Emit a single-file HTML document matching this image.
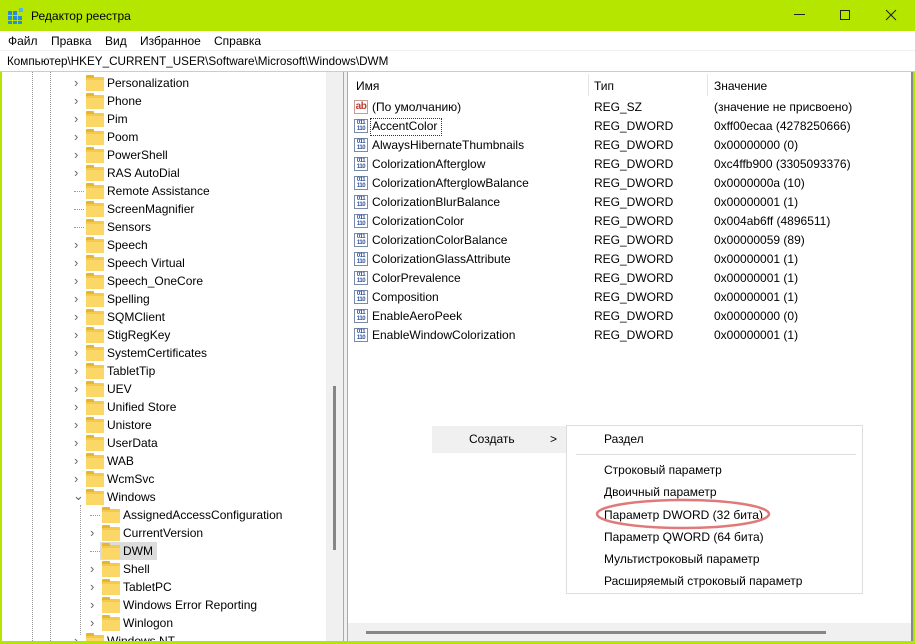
<!DOCTYPE html>
<html style="overflow:hidden;width:915px;height:644px"><head><meta charset="utf-8"><style>
*{margin:0;padding:0;box-sizing:border-box}
body{width:915px;height:644px;overflow:hidden;background:#b4e600;font-family:"Liberation Sans","DejaVu Sans",sans-serif;font-size:12px;color:#000;position:relative}
.abs{position:absolute}
.t{position:absolute;white-space:nowrap;line-height:16px}
.fold{position:absolute;width:18px;height:14px;background:#f5c94a;border-radius:1px}
.fold:before{content:"";position:absolute;left:0;top:-2px;width:8px;height:3px;background:#e8b530;border-radius:1px 1px 0 0}
.fold:after{content:"";position:absolute;left:0;top:3px;width:18px;height:11px;background:#fbd767}
.chev{position:absolute;color:#666;font-size:13px;line-height:16px}
.ico{position:absolute;width:14px;height:14px;border:1px solid #7a8aa8;background:#fff;font-size:6px;line-height:6px;color:#2a4f9e;font-weight:bold;text-align:center;letter-spacing:-0.5px}
#treewrap{position:absolute;left:2px;top:72px;width:324px;height:569px;overflow:hidden}
</style></head><body>
<div class="abs" style="left:8px;top:8px;width:16px;height:16px">
<svg width="16" height="16"><g fill="#2b8be0"><rect x="0" y="3" width="4" height="4"/><rect x="5" y="3" width="4" height="4"/><rect x="0" y="8" width="4" height="4"/><rect x="5" y="8" width="4" height="4"/><rect x="10" y="8" width="4" height="4"/><rect x="0" y="13" width="4" height="3"/><rect x="5" y="13" width="4" height="3"/><rect x="10" y="13" width="4" height="3"/></g><rect x="11" y="0" width="4" height="4" fill="#5ab0f0"/></svg></div>
<div class="t" style="left:31px;top:8px;font-size:12px">Редактор реестра</div>
<div class="abs" style="left:794px;top:14px;width:11px;height:1px;background:#222"></div>
<div class="abs" style="left:840px;top:10px;width:10px;height:10px;border:1px solid #222"></div>
<svg class="abs" style="left:885px;top:9px" width="12" height="12"><path d="M1 1L11 11M11 1L1 11" stroke="#222" stroke-width="1"/></svg>
<div class="abs" style="left:0;top:31px;width:915px;height:20px;background:#fff"></div>
<div class="t" style="left:8px;top:33px">Файл</div>
<div class="t" style="left:51px;top:33px">Правка</div>
<div class="t" style="left:105px;top:33px">Вид</div>
<div class="t" style="left:140px;top:33px">Избранное</div>
<div class="t" style="left:214px;top:33px">Справка</div>
<div class="abs" style="left:0;top:50px;width:915px;height:22px;background:#fff;border-top:1px solid #f0f0f0;border-bottom:1px solid #ccc"></div>
<div class="t" style="left:7px;top:54px;font-size:11.7px">Компьютер\HKEY_CURRENT_USER\Software\Microsoft\Windows\DWM</div>
<div class="abs" style="left:2px;top:72px;width:341px;height:569px;background:#fff"></div>
<div class="abs" style="left:326px;top:72px;width:17px;height:569px;background:#f0f0f0"></div>
<div class="abs" style="left:333px;top:386px;width:3px;height:164px;background:#868686"></div>
<div class="abs" style="left:343px;top:72px;width:5px;height:569px;background:#f0f0f0;border-left:1px solid #aaa;border-right:1px solid #aaa"></div>
<div id="treewrap"><div id="tree" style="position:absolute;left:-2px;top:-72px;width:326px;height:641px">
<div class="abs" style="left:32px;top:72px;height:569px;border-left:1px dotted #999"></div>
<div class="abs" style="left:50px;top:72px;height:569px;border-left:1px dotted #999"></div>
<div class="abs" style="left:80px;top:505px;height:130px;border-left:1px dotted #999"></div>
<div id="treei"></div></div></div>
<div class="abs" style="left:348px;top:72px;width:565px;height:569px;background:#fff"></div>
<div class="abs" style="left:588px;top:74px;width:1px;height:22px;background:#e5e5e5"></div>
<div class="abs" style="left:707px;top:74px;width:1px;height:22px;background:#e5e5e5"></div>
<div class="t" style="left:356px;top:78px">Имя</div>
<div class="t" style="left:594px;top:78px">Тип</div>
<div class="t" style="left:714px;top:78px">Значение</div>
<div id="list"></div>
<div class="abs" style="left:348px;top:623px;width:565px;height:18px;background:#f0f0f0"></div>
<div class="abs" style="left:366px;top:631px;width:460px;height:3px;background:#868686"></div>
<div class="abs" style="left:911px;top:72px;width:2px;height:569px;background:#888"></div>
<div class="abs" style="left:432px;top:426px;width:134px;height:27px;background:#f0f0f0"></div>
<div class="t" style="left:469px;top:431px">Создать</div>
<div class="t" style="left:550px;top:431px">&gt;</div>
<div class="abs" style="left:566px;top:425px;width:297px;height:169px;background:#fff;border:1px solid #ddd"></div>
<div class="abs" style="left:576px;top:454px;width:280px;height:1px;background:#ddd"></div>
<div class="t" style="left:604px;top:431px">Раздел</div>
<div class="t" style="left:604px;top:462px">Строковый параметр</div>
<div class="t" style="left:604px;top:484px">Двоичный параметр</div>
<div class="t" style="left:604px;top:507px">Параметр DWORD (32 бита)</div>
<div class="t" style="left:604px;top:529px">Параметр QWORD (64 бита)</div>
<div class="t" style="left:604px;top:551px">Мультистроковый параметр</div>
<div class="t" style="left:604px;top:573px">Расширяемый строковый параметр</div>
<svg class="abs" style="left:590px;top:496px" width="190" height="36"><ellipse cx="93" cy="18" rx="86" ry="14" fill="none" stroke="#e07a7a" stroke-width="2.5"/></svg>
<script>
var tr=[["Personalization",0,1],["Phone",0,1],["Pim",0,1],["Poom",0,1],["PowerShell",0,1],["RAS AutoDial",0,1],["Remote Assistance",0,0],["ScreenMagnifier",0,0],["Sensors",0,0],["Speech",0,1],["Speech Virtual",0,1],["Speech_OneCore",0,1],["Spelling",0,1],["SQMClient",0,1],["StigRegKey",0,1],["SystemCertificates",0,1],["TabletTip",0,1],["UEV",0,1],["Unified Store",0,1],["Unistore",0,1],["UserData",0,1],["WAB",0,1],["WcmSvc",0,1],["Windows",0,2],["AssignedAccessConfiguration",1,0],["CurrentVersion",1,1],["DWM",1,0],["Shell",1,1],["TabletPC",1,1],["Windows Error Reporting",1,1],["Winlogon",1,1],["Windows NT",0,1]];
var h="";tr.forEach(function(r,i){var y=75+i*18,x=r[1]?102:86;
if(r[0]=="DWM")h+='<div class="abs" style="left:100px;top:'+(y-1)+'px;width:57px;height:18px;background:#dcdcdc"></div>';
if(r[2]==1)h+='<div class="chev" style="left:'+(x-12)+'px;top:'+y+'px">&#x203A;</div>';
if(r[2]==2)h+='<div class="chev" style="left:'+(x-13)+'px;top:'+(y-1)+'px">&#x2304;</div>';
if(r[2]==0)h+='<div class="abs" style="left:'+(x-12)+'px;top:'+(y+8)+'px;width:10px;border-top:1px dotted #999"></div>';
h+='<div class="fold" style="left:'+x+'px;top:'+(y+2)+'px"></div><div class="t" style="left:'+(x+21)+'px;top:'+y+'px">'+r[0]+'</div>';});
document.getElementById("treei").innerHTML=h;
var ls=[["(По умолчанию)","REG_SZ","(значение не присвоено)"],["AccentColor","REG_DWORD","0xff00ecaa (4278250666)"],["AlwaysHibernateThumbnails","REG_DWORD","0x00000000 (0)"],["ColorizationAfterglow","REG_DWORD","0xc4ffb900 (3305093376)"],["ColorizationAfterglowBalance","REG_DWORD","0x0000000a (10)"],["ColorizationBlurBalance","REG_DWORD","0x00000001 (1)"],["ColorizationColor","REG_DWORD","0x004ab6ff (4896511)"],["ColorizationColorBalance","REG_DWORD","0x00000059 (89)"],["ColorizationGlassAttribute","REG_DWORD","0x00000001 (1)"],["ColorPrevalence","REG_DWORD","0x00000001 (1)"],["Composition","REG_DWORD","0x00000001 (1)"],["EnableAeroPeek","REG_DWORD","0x00000000 (0)"],["EnableWindowColorization","REG_DWORD","0x00000001 (1)"]];
h="";ls.forEach(function(r,i){var y=99+i*19;
h+=i==0?'<div class="ico" style="left:354px;top:'+(y+1)+'px;color:#c0392b;font-size:10px;line-height:12px;border-color:#c99">ab</div>':'<div class="ico" style="left:354px;top:'+(y+1)+'px">011<br>110</div>';
if(i==1)h+='<div class="abs" style="left:370px;top:'+(y)+'px;width:72px;height:18px;border:1px dotted #333"></div>';
h+='<div class="t" style="left:372px;top:'+y+'px">'+r[0]+'</div><div class="t" style="left:594px;top:'+y+'px">'+r[1]+'</div><div class="t" style="left:714px;top:'+y+'px">'+r[2]+'</div>';});
document.getElementById("list").innerHTML=h;
</script>
</body></html>
